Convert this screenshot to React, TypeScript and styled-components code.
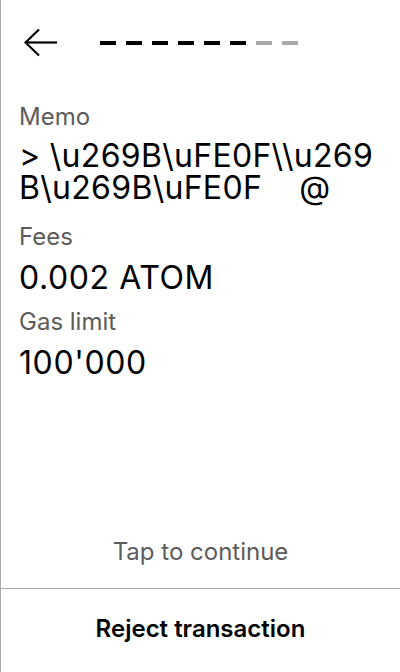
import React from "react";
import styled, { createGlobalStyle } from "styled-components";

const Global = createGlobalStyle`
  html, body { margin: 0; padding: 0; background: #fff; }
  body { font-family: Inter, "Noto Sans", sans-serif; }
  * { box-sizing: border-box; }
`;

const Screen = styled.div`
  width: 400px;
  height: 672px;
  border-left: 1px solid #a8a8a8;
  display: flex;
  flex-direction: column;
  background: #fff;
  color: #000;
`;

const Header = styled.div`
  height: 86px;
  display: flex;
  align-items: center;
  padding-left: 23px;
`;

const BackButton = styled.button`
  width: 34px;
  height: 30px;
  padding: 0;
  border: none;
  background: none;
  display: flex;
  align-items: center;
  cursor: pointer;
`;

const Progress = styled.div`
  display: flex;
  gap: 10px;
  margin-left: 42px;
`;

const Dash = styled.span<{ $done: boolean }>`
  width: 16px;
  height: 4px;
  background: ${(p) => (p.$done ? "#000" : "#aaaaaa")};
`;

const Content = styled.div`
  flex: 1;
  display: flex;
  flex-direction: column;
  gap: 10px;
  padding: 15px 18px 0 18px;
`;

const Field = styled.div`
  display: flex;
  flex-direction: column;
  gap: 7px;
`;

const Label = styled.div`
  font-family: Inter, sans-serif;
  font-size: 24px;
  line-height: 32px;
  color: #5c5c5c;
`;

const Value = styled.div`
  font-family: Inter, sans-serif;
  font-size: 32px;
  line-height: 36px;
  letter-spacing: 0.6px;
  color: #000;
`;

const MemoValue = styled(Value)`
  line-height: 32px;
  letter-spacing: 0.3px;
  white-space: pre-wrap;
  word-break: break-all;
  margin-bottom: 7px;
`;

const Hint = styled.div`
  text-align: center;
  font-family: Inter, sans-serif;
  font-size: 24px;
  line-height: 32px;
  color: #5c5c5c;
  padding-bottom: 20px;
`;

const Footer = styled.button`
  height: 84px;
  padding: 0 0 4px 0;
  border: none;
  border-top: 1px solid #a8a8a8;
  background: #fff;
  font-family: Inter, sans-serif;
  font-size: 24px;
  font-weight: 600;
  color: #000;
  cursor: pointer;
`;

const steps = [true, true, true, true, true, true, false, false];

export default function App() {
  return (
    <>
      <Global />
      <Screen>
        <Header>
          <BackButton aria-label="Back">
            <svg width="34" height="30" viewBox="0 0 34 30" fill="none">
              <path d="M1.5 14.5H33" stroke="#000" strokeWidth="2.2" />
              <path d="M15 1.5L1.5 14.5L15 27.5" stroke="#000" strokeWidth="2.2" />
            </svg>
          </BackButton>
          <Progress>
            {steps.map((d, i) => (
              <Dash key={i} $done={d} />
            ))}
          </Progress>
        </Header>
        <Content>
          <Field>
            <Label>Memo</Label>
            <MemoValue>{"> \\u269B\\uFE0F\\\\u269B\\u269B\\uFE0F    @"}</MemoValue>
          </Field>
          <Field>
            <Label>Fees</Label>
            <Value>0.002 ATOM</Value>
          </Field>
          <Field>
            <Label>Gas limit</Label>
            <Value>100'000</Value>
          </Field>
        </Content>
        <Hint>Tap to continue</Hint>
        <Footer>Reject transaction</Footer>
      </Screen>
    </>
  );
}
